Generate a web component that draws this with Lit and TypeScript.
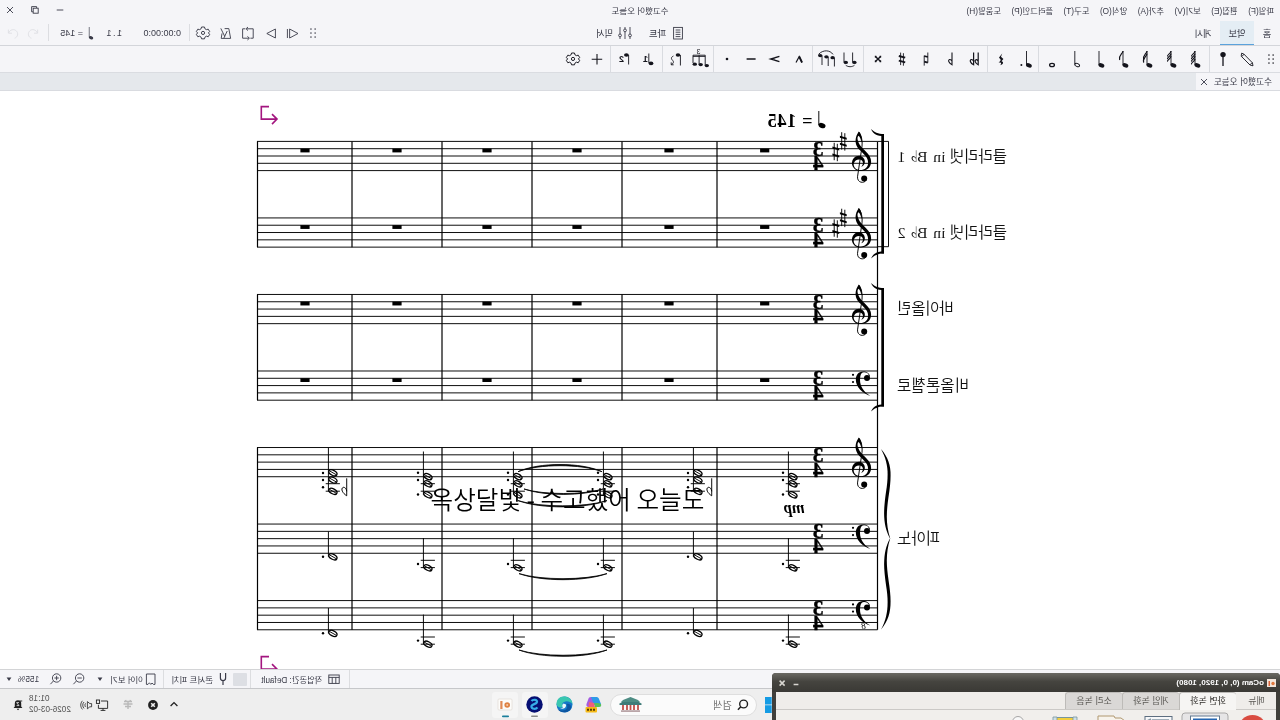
import { LitElement, html, svg, css, nothing } from "lit";
import type { SVGTemplateResult } from "lit";
import { customElement, property } from "lit/decorators.js";
import { classMap } from "lit/directives/class-map.js";

const gear = svg`
  <g transform="translate(12 12) scale(.8) translate(-12 -12.5)">
    <path d="M10.2 5h3.6l.6 2.2 1.9 1.1 2.2-.6 1.8 3-1.6 1.7 1.6 1.8-1.8 3-2.2-.7-1.9 1.2-.6 2.1h-3.6l-.6-2.1-1.9-1.2-2.2.7-1.8-3 1.6-1.8-1.6-1.7 1.8-3 2.2.6 1.9-1.1z" stroke-width="1.2" />
    <circle cx="12" cy="12.4" r="2" stroke-width="1.2" />
  </g>
`;

const dots = svg`
  <g class="solid">
    ${[8, 12, 16].map(
      (y) => svg`<rect x="9.2" y=${y - 0.6} width="1.3" height="1.3" /><rect x="13.4" y=${y - 0.6} width="1.3" height="1.3" />`
    )}
  </g>
`;

const quarter = svg`
  <ellipse class="solid" cx="10.6" cy="18.4" rx="3" ry="2.1" transform="rotate(-20 10.6 18.4)" />
  <path d="M13 18V4" />
`;

// quarter note with a number of flags hanging from the top of the stem
const flagged = (count: number) => svg`
  ${quarter}
  ${Array.from({ length: count }, (_, i) => {
    const y = 4 + i * 2.6;
    return svg`<path class="flag" d="M13 ${y}C13.4 ${y + 3} 17.6 ${y + 4} 16.4 ${y + (count > 2 ? 5.5 : 9)}" />`;
  })}
`;

const icons: Record<string, SVGTemplateResult> = {
  dots,
  gear,
  pencil: svg`<path d="M17.4 6.2l-2.2.8-8.6 8.8-.6 3 3-.8 8.8-8.8zM15 7.4l2.2 2M6.8 15.6l2.2 2.2" />`,
  pin: svg`<circle class="solid" cx="12" cy="7.6" r="2.7" /><path d="M12 8v11" stroke-width="1.3" />`,
  n64: flagged(4),
  n32: flagged(3),
  n16: flagged(2),
  n8: flagged(1),
  n4: quarter,
  n2: svg`<ellipse cx="10.8" cy="18" rx="2.5" ry="1.5" transform="rotate(-25 10.8 18)" /><path d="M13.2 17.5V4" />`,
  n1: svg`<ellipse cx="12" cy="18" rx="2.4" ry="1.7" stroke-width="1.3" />`,
  dotted: svg`<g transform="translate(-2.5 0)">${quarter}</g><circle class="solid" cx="15.6" cy="18" r="1" />`,
  rest: svg`<path class="solid" d="M10.8 6.5l3.2 4-1.8 2.4 2.2 3c-2.6-.9-3.2.4-1.7 2.4-3.2-.8-3.5-3.7-1.2-4L9.6 12l2.4-2.2z" />`,
  flat2: svg`<path d="M7.8 5.5v12.3c3-1.6 4-4.5 2.2-5.1-1-.2-2.2 1-2.2 1.8M12.4 5.5v12.3c3.4-1.6 4.2-4.7 2.4-5.3-1.2-.2-2.4 1.2-2.4 2" stroke-width="1.2" />`,
  flat: svg`<path d="M10 5.5v12.3c3.2-1.6 4.4-4.7 2.4-5.3-1.2-.2-2.4 1.2-2.4 2" stroke-width="1.1" />`,
  natural: svg`<path d="M10.2 5.5v10.2M13.8 8.6v10" /><path d="M10.2 10l3.6-1M10.2 15.7l3.6-1" stroke-width="1.8" />`,
  sharp: svg`<path d="M10.6 6.2v12.5M13.4 5.6v12.5" /><path d="M8.8 10.7l6.4-1.7M8.8 15.4l6.4-1.7" stroke-width="1.9" />`,
  sharp2: svg`<path d="M9.4 9.4l5.2 5.2M14.6 9.4l-5.2 5.2" stroke-width="1.4" /><path class="solid" d="M8.8 8.8h1.6v1.6H8.8zM13.6 8.8h1.6v1.6h-1.6zM8.8 13.6h1.6v1.6H8.8zM13.6 13.6h1.6v1.6h-1.6z" />`,
  tie: svg`
    <ellipse class="solid" cx="7.6" cy="15.4" rx="2.2" ry="1.7" /><path d="M9.4 15V5.5" />
    <ellipse class="solid" cx="16.2" cy="15.4" rx="2.2" ry="1.7" /><path d="M18 15V5.5M7.5 18.2c2.4 2 6.4 2 8.8 0" />`,
  slur: svg`
    <path d="M5 7.4c3-4.5 10-5 14.5 0M3.6 11v8.5M9.8 10v9M16 9v9" />
    <ellipse class="solid" cx="5.4" cy="10.7" rx="2.2" ry="1.6" /><ellipse class="solid" cx="11.6" cy="9.8" rx="2.2" ry="1.6" /><ellipse class="solid" cx="17.8" cy="8.6" rx="2.2" ry="1.6" />`,
  marcato: svg`<path d="M9 15.5l2.8-6 3.2 6" stroke-width="1.2" /><path d="M9 15.5l2.8-6" stroke-width="1.8" />`,
  accent: svg`<path d="M7.6 9.4l8.6 2.6-8.6 2.6" stroke-width="1.5" />`,
  tenuto: svg`<path d="M7.4 12h9" stroke-width="1.5" />`,
  staccato: svg`<circle class="solid" cx="12" cy="12" r="1.3" />`,
  tuplet: svg`
    <path d="M6.8 18V8.2h12.2V16M12.9 17.5V8.2M6.8 9.4h12.2" />
    <ellipse class="solid" cx="5.2" cy="18.6" rx="2.2" ry="1.6" /><ellipse class="solid" cx="11.3" cy="17.6" rx="2.2" ry="1.6" /><ellipse class="solid" cx="17.2" cy="17.2" rx="2.2" ry="1.6" />
    <text x="11.6" y="7" font-size="7">3</text>`,
  flip: svg`<ellipse class="solid" cx="10" cy="8" rx="2.3" ry="1.8" /><path d="M7.6 8v10.5M14.6 9c3 1.4 2 3.3.6 4.6-1.2 1.3-.6 3 1.4 4M16.8 15.4v2.4h-2.4" />`,
  voice1: svg`<ellipse class="solid" cx="10" cy="16.4" rx="2.4" ry="1.8" /><path d="M12.2 16V6.5" /><text x="13" y="15" font-size="9" font-weight="700">1</text>`,
  voice2: svg`<ellipse class="solid" cx="10.6" cy="8" rx="2.4" ry="1.8" /><path d="M8.4 8v9.5" /><text x="13" y="15" font-size="9" font-weight="700">2</text>`,
  plus: svg`<path d="M12 7v10.5M6.8 12.2h10.5" stroke-width="1.1" />`,
  close: svg`<path d="M9 9l6 6M15 9l-6 6" />`,
  closeBold: svg`<path d="M9.4 9.6l5 5M14.4 9.6l-5 5" stroke-width="1.5" />`,
  restore: svg`<rect x="8.8" y="10.2" width="5" height="5" /><path d="M10.4 10V8.6h5v5.2h-1.4" />`,
  minimize: svg`<path d="M8.7 12h6.6" />`,
  dash: svg`<path d="M9.6 13.5h4.8" stroke-width="1.5" />`,
  parts: svg`<rect x="7.6" y="6.4" width="8.8" height="11.6" /><path d="M9.6 9h4.8M9.6 11.2h4.8M9.6 13.4h4.8M9.6 15.6h4.8" />`,
  mixer: svg`<path d="M7 6v7M7 16v2M12 6v2M12 11v7M17 6v7M17 16v2" /><circle cx="7" cy="14.4" r="1.4" /><circle cx="12" cy="9.4" r="1.4" /><circle cx="17" cy="14.4" r="1.4" />`,
  play: svg`<path d="M15.4 8v9L7 12.5zM17.6 8v9" />`,
  rewind: svg`<path d="M7.6 8v9l8.6-4.5z" />`,
  loop: svg`<path d="M13 7.8H6.8v9.4h2.8M11.2 17.2h6.2V7.8h-2.8M12 6l2 1.8-2 1.8M12.6 15.4l-2 1.8 2 1.8" />`,
  metronome: svg`<path d="M7.4 17.4L9.2 7.6h4.2M16 12.4l.8 5H7.4M14.2 17.2l-3.4-7.2M17.2 7.4l-3.9 8" />`,
  undo: svg`<path d="M7.4 8.6v3.6h3.6M7.6 12c1.4-3.4 5.2-4.4 7.6-2.2 2.6 2.4 1.6 6.4-1.6 7.4" />`,
  redo: svg`<path d="M16.6 8.6v3.6H13M16.4 12c-1.4-3.4-5.2-4.4-7.6-2.2-2.6 2.4-1.6 6.4 1.6 7.4" />`,
  workspace: svg`<rect x="6.8" y="8" width="10.4" height="8.4" /><path d="M6.8 10.4h10.4M10.2 10.4v6M13.8 10.4v6" />`,
  fork: svg`<path d="M9.4 6v5c0 3.4 5.2 3.4 5.2 0V6M12 13.6V18" stroke-width="1.2" />`,
  page: svg`<path d="M8 7h8.6v10.4h-1.6l-1.4-1.6-1.4 1.6-1.2-1.4L9.6 17.4H8z" />`,
  zoomout: svg`<circle cx="11.4" cy="11" r="4.2" /><path d="M14.6 14l3 3.2M9.2 11h4.4" />`,
  zoomin: svg`<circle cx="11.4" cy="11" r="4.2" /><path d="M14.6 14l3 3.2M9.2 11h4.4M11.4 8.8v4.4" />`,
  caret: svg`<path class="solid" d="M9.6 10.6h4.8l-2.4 3.4z" />`,
  search: svg`<circle cx="11.4" cy="11" r="3.9" stroke-width="1.4" /><path d="M14.2 13.8l2.9 3" stroke-width="1.5" />`,
  chevron: svg`<path d="M8.6 13l3.4-3.4 3.4 3.4" stroke-width="1.3" />`,
  blocked: svg`<circle class="solid" cx="12" cy="12" r="4.9" /><path d="M10.2 10.2l3.6 3.6M13.8 10.2l-3.6 3.6" stroke="#eee" stroke-width="1.6" />`,
  bug: svg`<path d="M8 8.5h8M7.5 11h9M9 13.5h6M12 8v8M9.5 7l1 2M14.5 7l-1 2" stroke="#b9b9b9" stroke-width="1.4" />`,
  network: svg`<path d="M14 8H7.4v7.4h9.2v-3.6M9.6 17.4h4.8M12 15.4v2" /><rect x="15.4" y="7" width="3.2" height="3.4" />`,
  speaker: svg`<path d="M7.4 10.6h1.8l2.4-2v7.2l-2.4-2H7.4zM13.4 10.4c.9 1 .9 2.6 0 3.6M15 9c1.7 1.8 1.7 4.6 0 6.4M16.6 7.8c2.2 2.6 2.2 6 0 8.6" stroke-width=".8" />`,
  bell: svg`<path class="solid" d="M7.6 15l1.2-1.6v-3a3.2 3.2 0 0 1 6.4 0v3l1.2 1.6zM10.6 15.7h2.8L12 17.2z" /><path d="M11 9.6h2.4l-2.4 3h2.4" stroke="#eee" stroke-width=".8" /><path d="M7.8 8h2.6" />`,
};

@customElement("ui-icon")
export class UiIcon extends LitElement {
  static styles = css`
    :host {
      display: inline-flex;
      flex: none;
      width: 24px;
      height: 24px;
    }

    svg {
      flex: none;
      fill: none;
      stroke: currentColor;
      stroke-width: 0.9;
      overflow: visible;
    }

    .solid,
    text {
      fill: currentColor;
      stroke: none;
    }

    .flag {
      stroke-width: 1.2;
    }

    text {
      font-family: "Liberation Sans", sans-serif;
    }
  `;

  @property()
  name = "";

  render() {
    return html`<svg width="24" height="24" viewBox="0 0 24 24">${icons[this.name] ?? nothing}</svg>`;
  }
}

const STAFF_TOP = 141.4;
const STAFF_STEP = 76.53;
const LINE_GAP = 7.3;
const SYSTEM_LEFT = 402.5;
const SYSTEM_RIGHT = 1023;
const BARLINES = [563, 658, 748, 838, 928, 1022.5];
const STEMS = [491.6, 586.6, 676.6, 766.6, 856.6, 951.6];
const REST_CENTERS = [515.3, 611, 703, 793, 883, 975];

const staffTop = (index: number) => STAFF_TOP + STAFF_STEP * index;

@customElement("score-view")
export class ScoreView extends LitElement {
  static styles = css`
    :host {
      display: block;
      background: #fff;
      overflow: hidden;
    }

    svg {
      display: block;
    }

    .line {
      stroke: #000;
      stroke-width: 0.95;
      fill: none;
    }

    .bold {
      stroke: #000;
      stroke-width: 1.3;
      fill: none;
    }

    .bar {
      stroke: #000;
      stroke-width: 1.2;
    }

    .label {
      font: 350 15.6px "Liberation Serif", "Noto Sans CJK KR", serif;
      fill: #111;
    }

    .accidental {
      font: 16px "DejaVu Sans", sans-serif;
    }

    .meter {
      font: bold 21.5px "Liberation Serif", serif;
      stroke: #000;
      stroke-width: 0.3;
    }

    .tempo {
      font: bold 18.4px "Liberation Serif", serif;
    }

    .dynamic {
      font: italic bold 16px "Liberation Serif", serif;
    }

    .octave {
      font: italic 9px "Liberation Serif", serif;
    }

    .break {
      fill: none;
      stroke: #a3157f;
      stroke-width: 1.6;
    }
  `;

  private staff(index: number) {
    const top = staffTop(index);
    return svg`
      ${[0, 1, 2, 3, 4].map(
        (n) => svg`<path class="line" d="M${SYSTEM_LEFT} ${top + n * LINE_GAP}H${SYSTEM_RIGHT}" />`
      )}
      ${index === 3 || index > 4 ? this.bassClef(top) : this.trebleClef(top)}
      <text class="meter" x="456.6" y=${top + 14.4} textLength="11">3</text>
      <text class="meter" x="456.6" y=${top + 29} textLength="11">4</text>
      ${index < 2 ? svg`${this.sharp(436.7, top)}${this.sharp(444.2, top + 10.6)}` : nothing}
      ${index < 4
        ? REST_CENTERS.map((x) => svg`<rect x=${x - 4.6} y=${top + 7.2} width="9.2" height="3.8" />`)
        : nothing}
    `;
  }

  private trebleClef(top: number) {
    return svg`
      <g transform="translate(418.8 ${top + 3 * LINE_GAP})">
        <circle cx="-3" cy="15.2" r="3" />
        <path class="line" d="M-5 17C-2.5 20.5 4 19.5 3.7 13.5L-.8 -17C-1.6 -23 .2 -28.5 2.4 -31.3" />
        <path d="M2.4 -31.8C6.5 -26 6.6 -20 3.5 -15.5C0 -10.8 -6.6 -7.5 -6.9 -.5C-7 4 -3.5 6.8 1 6.8C5.3 6.6 7.8 3.6 7.5 .6C7 -3 3.8 -4.2 1.2 -3.8C-2 -3 -2.9 .6 .2 3.5C-5.5 1.8 -4.6 -6.6 1.5 -7.6C6 -8 9.3 -4.5 9.3 -.2C9.2 4.5 5.5 7.7 .6 7.7C-5.5 7.7 -9.9 4.2 -9.9 -1.5C-9.8 -9.5 -1.5 -13.5 1.5 -18.5C4 -22.5 4.3 -26 2.8 -27.5C1.2 -26.5 .2 -23.5 -.3 -20.5C-1.3 -25 .2 -29.5 2.4 -31.8Z" />
      </g>
    `;
  }

  private bassClef(top: number) {
    return svg`
      <g transform="translate(413 ${top + 6.8})">
        <circle cx="0" cy=".2" r="3" />
        <path d="M-3 -.5C-3 -4.5 .5 -6.4 4 -6.3C8.5 -6.2 11.2 -3 11.2 1.5C11.2 9.5 5 15.5 -3.3 18.2C3.5 14.2 7 8.5 7 2C7 -2.5 6 -5.5 3 -5.5C.5 -5.5 -1.4 -4.5 -1.8 -2.4Z" />
        <circle cx="14" cy="-3" r="1.1" />
        <circle cx="14" cy="4.2" r="1.1" />
      </g>
    `;
  }

  private sharp(x: number, y: number) {
    return svg`
      <g transform="translate(${x} ${y})">
        <path class="line" d="M-1.5 -8.2V9.2M1.6 -9.2V8.2" />
        <path d="M-3.4 -1.6V-3.6L3.4 -5.6V-3.6ZM-3.4 5.4V3.4L3.4 1.4V3.4Z" />
      </g>
    `;
  }

  private halfNote(stem: number, y: number) {
    return svg`
      <ellipse class="bold" cx=${stem - 4.5} cy=${y} rx="4.4" ry="2.5" transform="rotate(-28 ${stem - 4.5} ${y})" />
      <path class="line" d="M${stem - 8} ${y + 2}L${stem - 1} ${y - 2}" />
    `;
  }

  private chord(stem: number, top: number, heads: number[], ledgers: number[], dotRows: number[]) {
    return svg`
      <path class="line" d="M${stem} ${top}V${heads[heads.length - 1]}" />
      ${heads.map((y) => this.halfNote(stem, y))}
      ${ledgers.map((y) => svg`<path class="line" d="M${stem - 11.5} ${y}h14.2" />`)}
      ${dotRows.map((y) => svg`<circle cx=${stem + 5.4} cy=${y} r="1.2" />`)}
    `;
  }

  private flat(x: number, y: number) {
    return svg`<path class="line" d="M${x} ${y - 13}V${y + 4.5}C${x + 4} ${y + 2} ${x + 6.5} ${y - 2.5} ${x + 3.5} ${y - 4}C${x + 1.5} ${y - 4.2} ${x} ${y - 2} ${x} ${y}" />`;
  }

  private tie(left: number, right: number, y: number, depth: number) {
    const a = left + (right - left) * 0.25;
    const b = left + (right - left) * 0.75;
    return svg`<path d="M${left} ${y}C${a} ${y + depth * 1.25} ${b} ${y + depth * 1.25} ${right} ${y}C${b} ${y + depth * 1.5} ${a} ${y + depth * 1.5} ${left} ${y}Z" stroke="#000" stroke-width=".8" />`;
  }

  private piano() {
    return STEMS.map((stem, measure) => {
      if (measure === 1 || measure === 5) {
        return svg`
          ${this.chord(stem, 448, [472.8, 480, 491.3], [483.7, 491.2], [473, 480, 487.3])}
          ${this.flat(stem - 18.3, 491.3)}
          ${this.chord(stem, 531.5, [556.8], [], [556.8])}
          ${this.chord(stem, 608, [633.4], [], [633.2])}
        `;
      }
      return svg`
        ${this.chord(stem, 451.5, [476.6, 483.8, 494.8], [483.7, 491.2], [472.8, 480, 494.5])}
        ${this.chord(stem, 538, [567.8], [560.3, 567.6], [564])}
        ${this.chord(stem, 614.6, [644.2], [637, 644.2], [640.6])}
      `;
    });
  }

  private lineBreak(y: number) {
    return svg`<path class="break" d="M1011 ${y}H1018.7V${y + 12.5}H1003.5M1008 ${y + 7.5}L1003 ${y + 12.5}L1008 ${y + 17.5}" />`;
  }

  private bracket(top: number, bottom: number) {
    return svg`
      <rect x="396" y=${top} width="2.7" height=${bottom - top} />
      <path d="M396 ${top + 2.2}V${top}C402 ${top} 406 ${top - 2} 409 ${top - 5}C407 ${top} 403 ${top + 2} 396 ${top + 2.2}Z" />
      <path d="M396 ${bottom - 2.2}V${bottom}C402 ${bottom} 406 ${bottom + 2} 409 ${bottom + 5}C407 ${bottom} 403 ${bottom - 2} 396 ${bottom - 2.2}Z" />
    `;
  }

  private clarinetLabel(part: number, y: number) {
    return svg`
      <text class="label" x="273" y=${y}>클라리넷<tspan x="334.6">in</tspan><tspan x="352.4">B</tspan><tspan class="accidental" x="362.2">♭</tspan><tspan x="374.6">${part}</tspan></text>
    `;
  }

  render() {
    const groups = [
      [0, 1],
      [2, 3],
      [4, 6],
    ];
    const labels = [
      ["바이올린", 314.4, 56.5],
      ["비올론첼로", 390.6, 72],
      ["피아노", 544, 43],
    ] as const;

    return html`
      <svg width="1280" height="578" viewBox="0 91 1280 578">
        ${this.clarinetLabel(1, 161.6)} ${this.clarinetLabel(2, 238)}
        ${labels.map(
          ([text, y, width]) =>
            svg`<text class="label" x=${383 - width} y=${y} textLength=${width}>${text}</text>`
        )}
        <ellipse cx="458" cy="125.6" rx="3.6" ry="2.5" transform="rotate(-20 458 125.6)" />
        <path class="line" d="M461.2 125V111" />
        <text class="tempo" x="467.6" y="126.6" textLength="44.8">= 145</text>
        <text class="dynamic" x="475.5" y="513" textLength="21" lengthAdjust="spacingAndGlyphs">mp</text>
        ${this.lineBreak(106.6)} ${this.lineBreak(656.6)}
        ${[0, 1, 2, 3, 4, 5, 6].map((index) => this.staff(index))}
        ${groups.map(([first, last]) =>
          BARLINES.map(
            (x) => svg`<path class="bar" d="M${x} ${staffTop(first)}V${staffTop(last) + 4 * LINE_GAP}" />`
          )
        )}
        <path class="bar" d="M${SYSTEM_LEFT} ${staffTop(0)}V${staffTop(6) + 4 * LINE_GAP}" />
        ${this.bracket(134, 253.5)} ${this.bracket(288, 406.5)}
        <path class="line" d="M${SYSTEM_LEFT} 141.4H391.5V246.7H${SYSTEM_LEFT}" />
        <path
          d="M399 449C392 462 391 473 394 492C397 512 397 526 390 538.5C397 551 397 565 394 585C391 604 392 616 399 629.5C388 616 388 603 391.5 580C394 563 394 552 389.8 538.5C394 525 394 514 391.5 497C388 474 388 462 399 449Z"
        />
        <text class="octave" x="414.2" y="629">8</text>
        ${this.piano()}
        ${this.tie(678, 762, 471.7, -6.4)} ${this.tie(677, 756, 489, 4.8)}
        ${this.tie(673, 762, 500.6, 5.6)} ${this.tie(673, 761, 573.6, 5.4)}
        ${this.tie(673, 761, 650, 5.6)}
      </svg>
    `;
  }
}

const menus = ["파일(F)", "편집(E)", "보기(V)", "추가(A)", "양식(O)", "도구(T)", "플러그인(P)", "도움말(H)"];

const palette = [
  ["dots", "pencil", "pin"],
  ["n64", "n32", "n16", "n8", "n4", "n2", "n1"],
  ["dotted", "rest"],
  ["flat2", "flat", "natural", "sharp", "sharp2"],
  ["tie", "slur"],
  ["marcato", "accent", "tenuto", "staccato"],
  ["tuplet", "flip"],
  ["voice1", "voice2"],
  ["plus", "gear"],
];

@customElement("ocam-window")
export class OcamWindow extends LitElement {
  static styles = css`
    :host {
      display: block;
      box-sizing: border-box;
      padding: 0 4px;
      background: #403f3b;
      border-radius: 4px 4px 0 0;
      overflow: hidden;
      font-family: "Liberation Sans", "Noto Sans CJK KR", sans-serif;
    }

    .title {
      display: flex;
      align-items: center;
      height: 19px;
      margin: 0 -6px 0 -4px;
      padding-left: 4px;
      background: linear-gradient(#6a6963, #45443f 45%, #3a3935);
      color: #fff;
      font-size: 8px;
      font-weight: 700;
    }

    .title span {
      flex: 1;
      padding-left: 3px;
    }

    .title ui-icon {
      margin-left: -10px;
      color: #d8d6d0;
    }

    .tabs {
      display: flex;
      height: 17px;
      background: #efedea;
      border-bottom: 1px solid #cbc9c6;
      font-size: 9px;
      line-height: 17px;
      color: #5b5955;
      text-align: center;
    }

    .tab {
      box-sizing: border-box;
      width: 57px;
      background: #dad8d6;
      border: 1px solid #bdbbb8;
      border-width: 1px 1px 0 0;
      border-radius: 3px 3px 0 0;
    }

    .tab--menu {
      width: 40px;
      background: none;
      border-color: transparent;
    }

    .tab--active {
      height: 18px;
      background: #f6f5f3;
      color: #33312e;
    }

    .ribbon {
      display: flex;
      align-items: flex-start;
      height: 12px;
      background: #f1efec;
    }
  `;

  render() {
    return html`
      <div class="title">
        <svg width="9" height="9" viewBox="0 0 9 9">
          <rect y="1" width="9" height="8" fill="#f3e6dc" />
          <circle cx="3" cy="5.5" r="1.7" fill="#e0793f" />
          <rect x="6" y="3" width="1.5" height="5" fill="#d9643a" />
        </svg>
        <span>oCam (0, 0, 1920, 1080)</span>
        <ui-icon name="dash"></ui-icon>
        <ui-icon name="closeBold"></ui-icon>
      </div>
      <div class="tabs">
        <div class="tab tab--menu">메뉴</div>
        <div class="tab tab--active">화면 녹화</div>
        <div class="tab">게임 녹화</div>
        <div class="tab">소리 녹음</div>
      </div>
      <div class="ribbon">
        <svg width="500" height="12" viewBox="4 709 500 12">
          <circle cx="27.5" cy="728" r="14" fill="#d94b40" />
          <rect x="52" y="712" width="46" height="20" rx="3" fill="#e6e5e6" stroke="#a9a8a8" />
          <rect x="60.5" y="715" width="29" height="10" fill="#fff" stroke="#62798f" />
          <rect x="63" y="717.5" width="24" height="8" fill="#2565b0" />
          <rect x="108" y="715.5" width="27" height="10" fill="#f7f8fa" stroke="#5d6e80" />
          <path d="M111 719h17M129 718l4 2" stroke="#8797a5" stroke-width="1.5" />
          <path d="M155 720l4-3h6l1-2h16v8h-27z" fill="#f7f3eb" stroke="#b09870" />
          <path d="M154 719h5v4h-5z" fill="#e7b653" />
          <rect x="204" y="717" width="22" height="6" fill="#f3cf3d" />
          <path d="M204 716.5h22" stroke="#78969f" />
          <path d="M203 716h4v4h-4zM223 716h4v4h-4z" fill="#cfe1e6" stroke="#78969f" stroke-width=".8" />
          <circle cx="262" cy="721" r="5.5" fill="#f8f8f8" stroke="#a5a5a5" />
        </svg>
      </div>
    `;
  }
}

@customElement("app-root")
export class AppRoot extends LitElement {
  static styles = css`
    :host {
      position: relative;
      display: block;
      width: 1280px;
      height: 720px;
      overflow: hidden;
      font-family: "Liberation Sans", "Noto Sans CJK KR", sans-serif;
      font-size: 8.5px;
      color: #3a3b48;
    }

    /* the captured desktop is flipped, only the caption reads left to right */
    .desktop {
      position: relative;
      display: grid;
      grid-template-rows: 20px 26px 27px 18px 578px 20px 31px;
      height: 720px;
      transform: scaleX(-1);
      background: #f5f5f8;
      white-space: nowrap;
    }

    .row {
      display: grid;
      grid-template-columns: 1fr auto 1fr;
      grid-template-rows: 100%;
      align-items: center;
    }

    .menus {
      display: flex;
      gap: 10.5px;
      padding-left: 6px;
      font-size: 8.3px;
    }

    .window-buttons {
      display: flex;
      gap: 1px;
      justify-self: end;
      margin: -2px -2px -2px 0;
    }

    .toolbar {
      border-bottom: 1px solid #d3d5da;
      font-size: 9.3px;
    }

    .pages,
    .panels,
    .transport {
      display: flex;
      align-items: center;
      height: 100%;
    }

    .page {
      display: flex;
      align-items: center;
      justify-content: center;
      box-sizing: border-box;
      width: 34px;
      height: 24px;
      align-self: flex-end;
    }

    .page--home {
      width: 26px;
    }

    .page--active {
      background: #e4edf4;
      border-bottom: 1.5px solid #5aa2dc;
    }

    .panels {
      margin-left: -6px;
    }

    .panels span {
      margin-right: 12px;
    }

    .panels span:last-child {
      margin-right: 0;
    }

    .transport {
      justify-self: end;
      width: 325px;
      font-size: 9px;
    }

    .control {
      width: 22.5px;
    }

    .control:first-child {
      margin-right: -3px;
    }

    .divider {
      height: 17px;
      width: 1px;
      background: #dcdde1;
    }

    .divider--time {
      margin-left: 3px;
    }

    .time {
      width: 59px;
      padding-left: 8px;
    }

    .beat {
      width: 31px;
      word-spacing: -1px;
    }

    .tempo {
      display: flex;
      align-items: center;
      width: 42px;
    }

    .tempo ui-icon {
      margin: 0 -5px 0 -11px;
      transform: scale(0.75);
    }

    .history {
      display: flex;
      margin-left: 3px;
      color: #dfe0e4;
    }

    .history ui-icon {
      width: 20px;
    }

    .palette {
      display: flex;
      align-items: center;
      margin-left: -4.5px;
      color: #14141c;
      border-bottom: 1px solid #dadce1;
    }

    .palette .group {
      display: flex;
      align-items: center;
      box-sizing: border-box;
      height: 100%;
      padding: 0 1.25px 0 1px;
      border-right: 1px solid #d9dbe0;
    }

    .palette .group:last-child {
      border: 0;
    }

    .documents {
      display: flex;
      background: #e5e8ec;
      border-bottom: 1px solid #d9dbe0;
      box-sizing: border-box;
    }

    .document {
      display: flex;
      align-items: center;
      box-sizing: border-box;
      width: 84px;
      padding-left: 8px;
      background: #f5f5f8;
      font-size: 8.7px;
    }

    .document ui-icon {
      margin-left: -2px;
    }

    .status {
      display: flex;
      align-items: center;
      box-sizing: border-box;
      padding-left: 930px;
      border-top: 1px solid #d3d4d6;
      border-bottom: 1px solid #c6c7ca;
    }

    .cell {
      display: flex;
      align-items: center;
      box-sizing: border-box;
      height: 100%;
      border-left: 1px solid #dcdde0;
    }

    .cell--workspace {
      width: 99px;
      padding-left: 3px;
      font-size: 8.2px;
    }

    .cell--pitch {
      width: 87px;
      padding-left: 3px;
    }

    .cell--view {
      width: 164px;
      font-size: 8.3px;
    }

    .swatch {
      width: 14px;
      height: 13px;
      margin-right: -2px;
      background: #dddfe4;
      border-radius: 1px;
    }

    .fork {
      margin-right: -2px;
    }

    .sheet {
      margin-right: -4px;
    }

    .mode {
      margin: 0 -3px 0 -2px;
    }

    .lens {
      margin-right: -1px;
    }

    .zoom {
      margin: 0 -3px 0 5px;
    }

    .taskbar {
      display: flex;
      align-items: center;
      box-sizing: border-box;
      padding-left: 500px;
      background: #eee;
      color: #202020;
    }

    .search {
      display: flex;
      align-items: center;
      box-sizing: border-box;
      width: 147px;
      height: 22px;
      margin-left: 7px;
      padding: 0 8px 0 1px;
      border: 1px solid #dedede;
      border-radius: 11px;
      background: #fbfbfb;
      font-size: 10.3px;
    }

    .search span {
      flex: 1;
      margin-left: -1px;
      color: #777;
    }

    .app {
      display: flex;
      align-items: center;
      justify-content: center;
      width: 26px;
      height: 26px;
      margin-left: 3.4px;
      border-radius: 3px;
    }

    .app--open {
      background: #f5f5f5;
    }

    .tray {
      display: flex;
      align-items: center;
      gap: 1px;
      margin-left: auto;
    }

    .chevron {
      margin-right: -4px;
    }

    .speaker {
      margin: 0 -1px 0 -9px;
    }

    .clock {
      width: 46px;
      font-size: 8.2px;
      line-height: 10.5px;
      text-align: right;
      color: #555;
    }

    .bell {
      margin: 0 6px 0 -2px;
    }

    ocam-window {
      position: absolute;
      left: 0;
      bottom: 0;
      width: 508px;
      height: 47px;
    }

    .caption {
      position: absolute;
      left: 430.5px;
      top: 480px;
      color: #000;
      font: 350 24.6px/36px "Noto Sans CJK KR", sans-serif;
      white-space: nowrap;
    }
  `;

  private renderToolbar() {
    return html`
      <div class="row toolbar">
        <div class="pages">
          <div class="page page--home">홈</div>
          <div class=${classMap({ page: true, "page--active": true })}>악보</div>
          <div class="page">게시</div>
        </div>
        <div class="panels">
          <ui-icon name="parts"></ui-icon><span>파트</span>
          <ui-icon name="mixer"></ui-icon><span>믹서</span>
        </div>
        <div class="transport">
          ${["dots", "play", "rewind", "loop", "metronome", "gear"].map(
            (name) => html`<ui-icon class="control" name=${name}></ui-icon>`
          )}
          <div class="divider divider--time"></div>
          <div class="time">0:00:00:0</div>
          <div class="beat">1 . 1</div>
          <div class="tempo"><ui-icon name="n4"></ui-icon>= 145</div>
          <div class="divider"></div>
          <div class="history"><ui-icon name="undo"></ui-icon><ui-icon name="redo"></ui-icon></div>
        </div>
      </div>
    `;
  }

  private renderStatus() {
    return html`
      <div class="status">
        <div class="cell cell--workspace"><ui-icon name="workspace"></ui-icon>작업공간: Default</div>
        <div class="cell cell--pitch">
          <div class="swatch"></div>
          <ui-icon class="fork" name="fork"></ui-icon>콘서트 피치
        </div>
        <div class="cell cell--view">
          <ui-icon class="sheet" name="page"></ui-icon>이어 보기
          <ui-icon class="mode" name="caret"></ui-icon>
          <ui-icon class="lens" name="zoomout"></ui-icon>
          <ui-icon name="zoomin"></ui-icon>
          <span class="zoom">155%</span>
          <ui-icon name="caret"></ui-icon>
        </div>
      </div>
    `;
  }

  private renderTaskbar() {
    return html`
      <div class="taskbar">
        <svg width="16" height="16" viewBox="0 0 16 16">
          <path d="M0 0h7.5v7.5H0zM8.3 0H15v7.5H8.3zM0 8.3h7.5V16H0zM8.3 8.3H15V16H8.3z" fill="#149be4" />
        </svg>
        <div class="search">
          <ui-icon name="search"></ui-icon><span>검색</span>
          <svg width="23" height="16" viewBox="0 0 23 16">
            <path d="M4 3l7.5-3L19 3l2 2H2z" fill="#4e8d84" />
            <path d="M0 7l3-2h17l3 2-1 1H1z" fill="#3f7c78" />
            <path d="M4 8v5M8 8v5M11.5 8v5M15 8v5M19 8v5" stroke="#c0504a" stroke-width="1.8" />
            <path d="M2 13.2h19v1.8H2z" fill="#b9a5a8" />
          </svg>
        </div>
        <div class="app">
          <svg width="17" height="17" viewBox="0 0 17 17">
            <path d="M6 1h5c2 0 2.5 1 3 3l1.5 4c.5 2-.5 3-2 3H10z" fill="#a35be0" />
            <path d="M1 8l2-5c.6-1.5 1.5-2 3-2h5L8 9H3z" fill="#2e9be8" />
            <path d="M1 8c-.5 2 0 3 2 3h4l1-4H4z" fill="#57c05a" />
            <path d="M8 7l5-1 .5 5H7z" fill="#f0607a" />
            <rect x="5" y="11" width="11.5" height="5.5" rx="1" fill="#f5b914" />
            <path d="M7 13.7h8" stroke="#5a3b00" stroke-width="2" stroke-dasharray="2 1" />
          </svg>
        </div>
        <div class="app">
          <svg width="17" height="17" viewBox="0 0 17 17">
            <circle cx="8.5" cy="8.5" r="8" fill="#1678c8" />
            <path d="M.5 8C1 3 5 .5 9 .5c5 0 7.5 3.5 7.5 7 0 3-2.5 4.5-5 4C9 11 11 9.5 10.5 7.5 9.5 4.5 3.5 4 .5 8z" fill="#39c7b0" />
            <path d="M6.5 8c-2 3 0 6.5 4.5 6.5 2 0 3.5-.6 4.7-1.7C13 17 6.5 17.5 3 14 .5 10.5 3 7 6.5 8z" fill="#0d55a0" />
            <path d="M7 8.5c-.6 3 2.5 5 6 4.2-1.8.1-3-.4-2.6-1.7.5-1 .6-2.5-1-3.5z" fill="#e9f5fb" />
          </svg>
        </div>
        <div class="app app--open">
          <svg width="17" height="26" viewBox="0 0 17 26">
            <circle cx="8.5" cy="12.5" r="8.2" fill="#060f73" />
            <path d="M11.5 9c-1.5-2-6-1.5-5.5 1 .4 2.5 5.5 1.8 5.6 4.5 0 2.8-4.6 3-6 .8" fill="none" stroke="#36aee8" stroke-width="2.2" />
            <rect x="5" y="23.5" width="7" height="1.6" rx=".8" fill="#8b8b8b" />
          </svg>
        </div>
        <div class="app app--open">
          <svg width="17" height="26" viewBox="0 0 17 26">
            <rect x="2" y="7" width="14" height="11" rx="1" fill="#fdfcfa" stroke="#dcd5ce" stroke-width=".6" />
            <circle cx="6.8" cy="13" r="2.8" fill="#df8243" />
            <circle cx="6.8" cy="13" r="1" fill="#f6cda9" />
            <rect x="11.5" y="9" width="2.2" height="8" fill="#e08a55" />
            <rect x="5" y="23.5" width="7" height="1.8" rx=".8" fill="#1b7f9c" />
          </svg>
        </div>
        <div class="tray">
          <ui-icon class="chevron" name="chevron"></ui-icon>
          <ui-icon name="blocked"></ui-icon>
          <ui-icon name="bug"></ui-icon>
          <ui-icon name="network"></ui-icon>
          <ui-icon class="speaker" name="speaker"></ui-icon>
          <div class="clock">01:18<br />2026-03-02</div>
          <ui-icon class="bell" name="bell"></ui-icon>
        </div>
      </div>
    `;
  }

  render() {
    return html`
      <div class="desktop">
        <div class="row">
          <div class="menus">${menus.map((label) => html`<span>${label}</span>`)}</div>
          <span>수고했어 오늘도</span>
          <div class="window-buttons">
            <ui-icon name="minimize"></ui-icon>
            <ui-icon name="restore"></ui-icon>
            <ui-icon name="close"></ui-icon>
          </div>
        </div>
        ${this.renderToolbar()}
        <div class="palette">
          ${palette.map(
            (group) => html`
              <div class="group">${group.map((name) => html`<ui-icon name=${name}></ui-icon>`)}</div>
            `
          )}
        </div>
        <div class="documents">
          <div class="document">수고했어 오늘도<ui-icon name="close"></ui-icon></div>
        </div>
        <score-view></score-view>
        ${this.renderStatus()} ${this.renderTaskbar()}
        <ocam-window></ocam-window>
      </div>
      <div class="caption">옥상달빛 - 수고했어 오늘도</div>
    `;
  }
}

declare global {
  interface HTMLElementTagNameMap {
    "app-root": AppRoot;
    "ui-icon": UiIcon;
    "score-view": ScoreView;
    "ocam-window": OcamWindow;
  }
}
